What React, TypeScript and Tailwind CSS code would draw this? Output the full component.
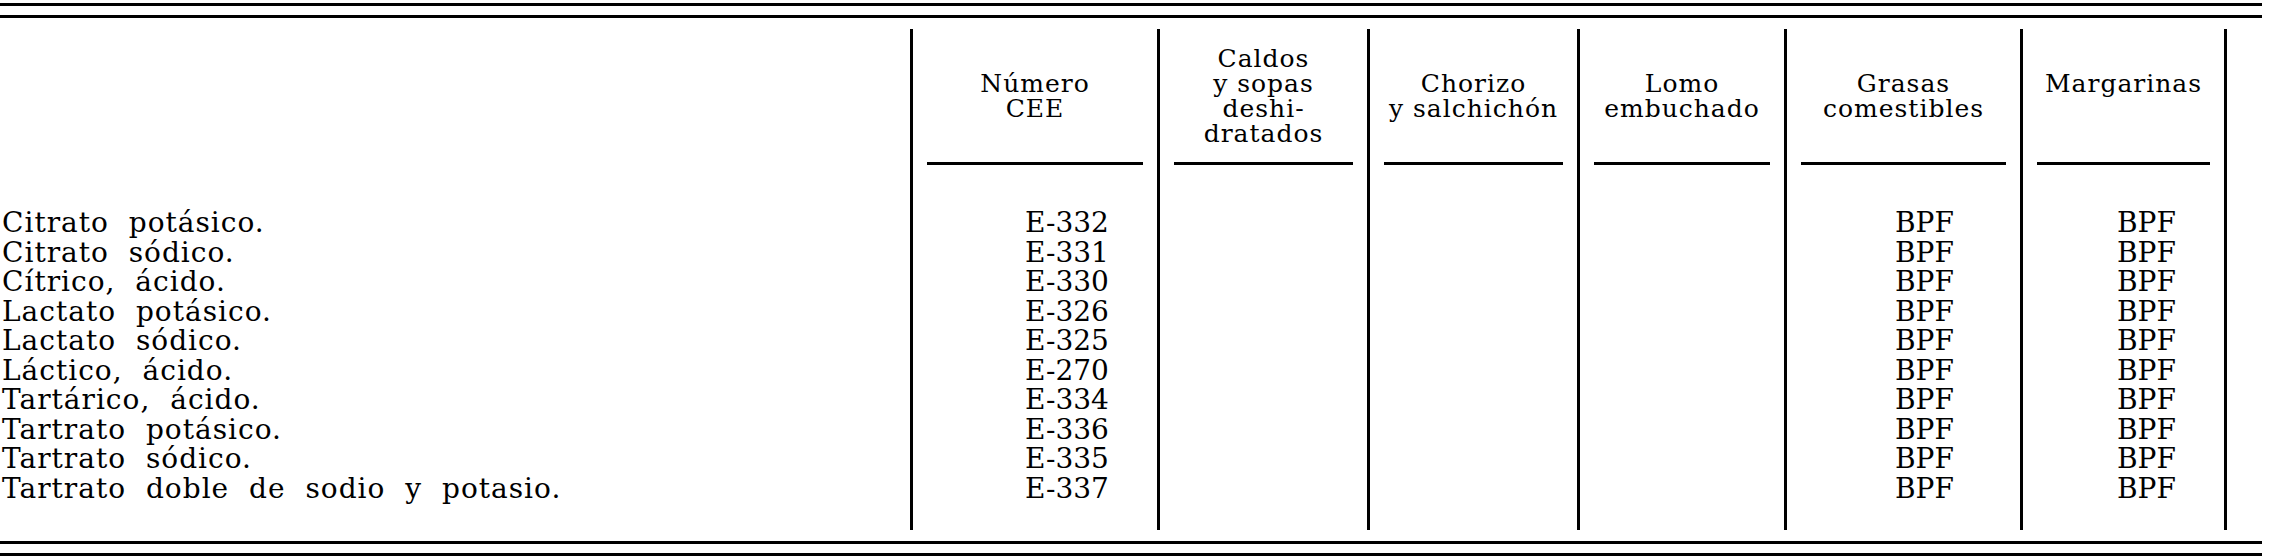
const rows = [
  'Citrato potásico.',
  'Citrato sódico.',
  'Cítrico, ácido.',
  'Lactato potásico.',
  'Lactato sódico.',
  'Láctico, ácido.',
  'Tartárico, ácido.',
  'Tartrato potásico.',
  'Tartrato sódico.',
  'Tartrato doble de sodio y potasio.',
];

const numbers = ['E-332', 'E-331', 'E-330', 'E-326', 'E-325', 'E-270', 'E-334', 'E-336', 'E-335', 'E-337'];
const bpf = rows.map(() => 'BPF');

type Col = {
  head: string[];
  values: string[];
  pad: string;
  last?: boolean;
};

const cols: Col[] = [
  { head: ['Número', 'CEE'], values: numbers, pad: 'pl-[112px]' },
  { head: ['Caldos', 'y sopas', 'deshi-', 'dratados'], values: [], pad: '' },
  { head: ['Chorizo', 'y salchichón'], values: [], pad: '' },
  { head: ['Lomo', 'embuchado'], values: [], pad: '' },
  { head: ['Grasas', 'comestibles'], values: bpf, pad: 'pl-[108px]' },
  { head: ['Margarinas', '\u00a0'], values: bpf, pad: 'pl-[94px]', last: true },
];

function DoubleRule() {
  return (
    <div className="w-[2262px]">
      <div className="h-[3px] bg-black" />
      <div className="h-[9px]" />
      <div className="h-[3px] bg-black" />
    </div>
  );
}

export default function App() {
  return (
    <div className="w-[2269px] h-[557px] overflow-hidden bg-white text-black font-['DejaVu_Serif','Liberation_Serif',serif]">
      <div className="pt-[3px]">
        <DoubleRule />
      </div>

      <div className="mt-[11px] grid h-[501px] grid-cols-[910px_247px_210px_210px_207px_236px_207px]">
        {/* first column: product names */}
        <div className="flex flex-col">
          <div className="h-[136px]" />
          <div className="pt-[43px] pl-[2px] text-[28px] leading-[29.5px] tracking-[1px] [word-spacing:10px]">
            {rows.map((r) => (
              <div key={r} className="whitespace-nowrap">
                {r}
              </div>
            ))}
          </div>
        </div>

        {cols.map((c, i) => (
          <div
            key={i}
            className={`flex flex-col border-l-[3px] border-black ${c.last ? 'border-r-[3px]' : ''}`}
          >
            <div className="flex h-[133px] items-center justify-center text-center text-[25px] leading-[25px] tracking-[1px]">
              <div>
                {c.head.map((h, j) => (
                  <div key={j} className="whitespace-nowrap">
                    {h}
                  </div>
                ))}
              </div>
            </div>
            <div className="mx-[14px] h-[3px] bg-black" />
            <div className={`pt-[43px] text-[28px] leading-[29.5px] ${c.pad}`}>
              {c.values.map((v, j) => (
                <div key={j} className="whitespace-nowrap">
                  {v}
                </div>
              ))}
            </div>
          </div>
        ))}
      </div>

      <div className="mt-[11px]">
        <DoubleRule />
      </div>
    </div>
  );
}
